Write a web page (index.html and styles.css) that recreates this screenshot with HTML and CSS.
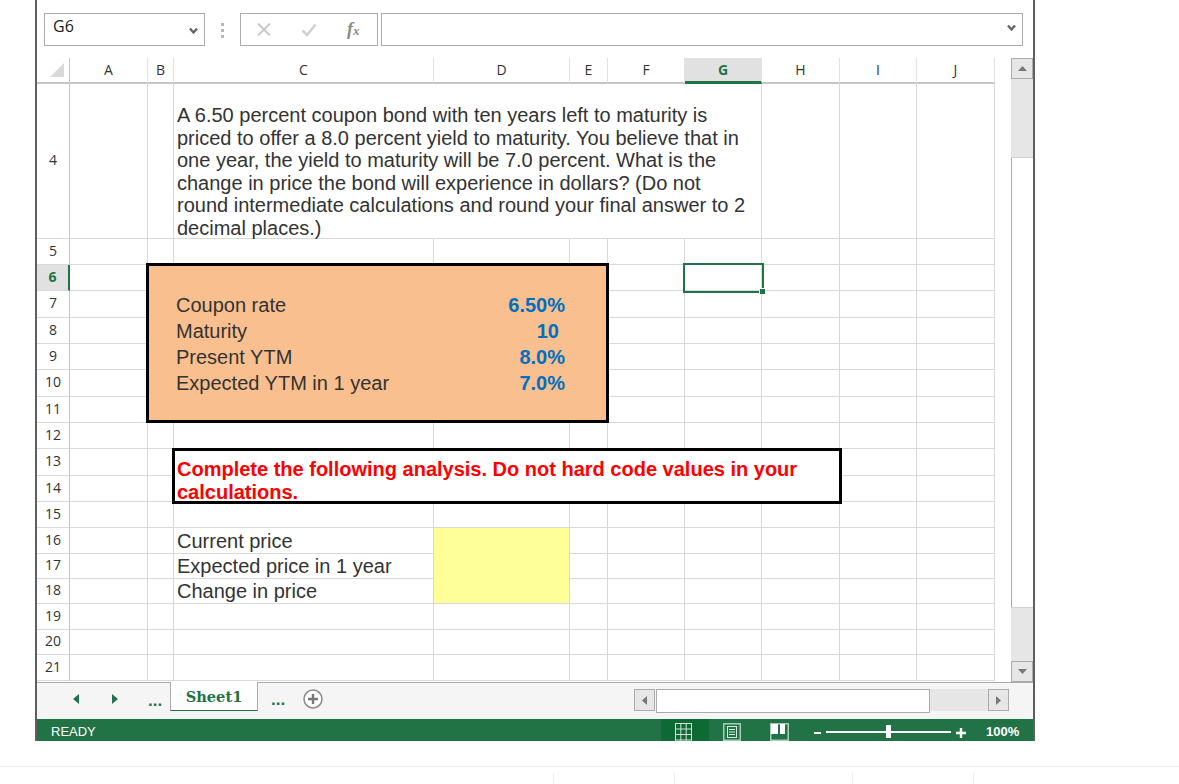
FILE: index.html
```html
<!DOCTYPE html>
<html lang="en">
<head>
<meta charset="utf-8">
<title>Sheet1</title>
<link rel="stylesheet" href="styles.css">
</head>
<body>
<div class="app">
  <div class="fbar">
    <div class="namebox"><span>G6</span>
      <svg class="chev" width="9" height="8" viewBox="0 0 9 8"><path d="M1 1.500 4.500 5.500 8 1.500" fill="none" stroke="#666" stroke-width="2.400"/></svg>
    </div>
    <div class="dots"><i></i><i></i><i></i></div>
    <div class="fbtns">
      <svg width="14" height="13" viewBox="0 0 14 13"><path d="M1 .5 13 12.500M13 .5 1 12.500" stroke="#c8c8c8" stroke-width="2" fill="none"/></svg>
      <svg width="16" height="14" viewBox="0 0 16 14"><path d="M1.500 7.500 6 12 14.500 1.500" stroke="#d2d2d2" stroke-width="2.600" fill="none"/></svg>
      <span class="fx">f<small>x</small></span>
    </div>
    <div class="finput">
      <svg class="chev" width="9" height="8" viewBox="0 0 9 8"><path d="M1 1.500 4.500 5.500 8 1.500" fill="none" stroke="#666" stroke-width="2.400"/></svg>
    </div>
  </div>

  <div class="sheet">
    <table class="grid">
      <colgroup>
        <col class="c-rh"><col class="c-a"><col class="c-b"><col class="c-c"><col class="c-d"><col class="c-e"><col class="c-f"><col class="c-g"><col class="c-h"><col class="c-i"><col class="c-j">
      </colgroup>
      <tr class="hdr">
        <th class="corner"><svg width="16" height="16" viewBox="0 0 16 16"><path d="M15 1V15H1Z" fill="#d9d9d9"/></svg></th>
        <th>A</th><th>B</th><th>C</th><th>D</th><th>E</th><th>F</th><th class="sel-col">G</th><th>H</th><th>I</th><th>J</th>
      </tr>
      <tr class="r155">
        <th>4</th><td></td><td></td>
        <td colspan="5" class="question"><div>A 6.50 percent coupon bond with ten years left to maturity is<br>priced to offer a 8.0 percent yield to maturity. You believe that in<br>one year, the yield to maturity will be 7.0 percent. What is the<br>change in price the bond will experience in dollars? (Do not<br>round intermediate calculations and round your final answer to 2<br>decimal places.)</div></td>
        <td></td><td></td><td></td>
      </tr>
      <tr class="r26"><th>5</th><td></td><td></td><td></td><td></td><td></td><td></td><td></td><td></td><td></td><td></td></tr>
      <tr class="r26">
        <th class="sel-row">6</th><td></td>
        <td colspan="4" rowspan="6" class="merged">
          <div class="inputs">
            <span>Coupon rate</span><b>6.50%</b>
            <span>Maturity</span><b class="plain">10</b>
            <span>Present YTM</span><b>8.0%</b>
            <span>Expected YTM in 1 year</span><b>7.0%</b>
          </div>
        </td>
        <td></td>
        <td class="active"><div class="selection"><i></i></div></td>
        <td></td><td></td><td></td>
      </tr>
      <tr class="r27"><th>7</th><td></td><td></td><td></td><td></td><td></td><td></td></tr>
      <tr class="r26"><th>8</th><td></td><td></td><td></td><td></td><td></td><td></td></tr>
      <tr class="r26"><th>9</th><td></td><td></td><td></td><td></td><td></td><td></td></tr>
      <tr class="r27"><th>10</th><td></td><td></td><td></td><td></td><td></td><td></td></tr>
      <tr class="r26"><th>11</th><td></td><td></td><td></td><td></td><td></td><td></td></tr>
      <tr class="r26"><th>12</th><td></td><td></td><td></td><td></td><td></td><td></td><td></td><td></td><td></td><td></td></tr>
      <tr class="r27">
        <th>13</th><td></td><td></td>
        <td colspan="6" rowspan="2" class="merged"><div class="notice">Complete the following analysis. Do not hard code values in your<br>calculations.</div></td>
        <td></td><td></td>
      </tr>
      <tr class="r26"><th>14</th><td></td><td></td><td></td><td></td></tr>
      <tr class="r26"><th>15</th><td></td><td></td><td></td><td></td><td></td><td></td><td></td><td></td><td></td><td></td></tr>
      <tr class="r26"><th>16</th><td></td><td></td><td class="label">Current price</td><td rowspan="3" class="answer"></td><td></td><td></td><td></td><td></td><td></td><td></td></tr>
      <tr class="r25"><th>17</th><td></td><td></td><td class="label">Expected price in 1 year</td><td></td><td></td><td></td><td></td><td></td><td></td></tr>
      <tr class="r25"><th>18</th><td></td><td></td><td class="label">Change in price</td><td></td><td></td><td></td><td></td><td></td><td></td></tr>
      <tr class="r26"><th>19</th><td></td><td></td><td></td><td></td><td></td><td></td><td></td><td></td><td></td><td></td></tr>
      <tr class="r25"><th>20</th><td></td><td></td><td></td><td></td><td></td><td></td><td></td><td></td><td></td><td></td></tr>
      <tr class="r26"><th>21</th><td></td><td></td><td></td><td></td><td></td><td></td><td></td><td></td><td></td><td></td></tr>
    </table>
    <div class="vscroll">
      <div class="sbtn v"><svg width="9" height="5" viewBox="0 0 9 5"><path d="M4.500 0 9 5H0Z" fill="#777"/></svg></div>
      <div class="vtrack t1"></div>
      <div class="vthumb"></div>
      <div class="vtrack t2"></div>
      <div class="sbtn v"><svg width="9" height="5" viewBox="0 0 9 5"><path d="M0 0H9L4.500 5Z" fill="#777"/></svg></div>
    </div>
  </div>

  <div class="tabbar">
    <div class="tabnav">
      <svg width="6" height="10" viewBox="0 0 6 10"><path d="M6 0V10L0 5Z" fill="#217346"/></svg>
      <svg width="6" height="10" viewBox="0 0 6 10"><path d="M0 0V10L6 5Z" fill="#217346"/></svg>
      <span class="more">...</span>
    </div>
    <div class="tab">Sheet1</div>
    <span class="more after">...</span>
    <svg class="addsheet" width="20" height="20" viewBox="0 0 20 20"><circle cx="10" cy="10" r="9" fill="#fff" stroke="#8a8a8a" stroke-width="1.500"/><path d="M10 5V15M5 10H15" stroke="#777" stroke-width="2.400"/></svg>
    <div class="hscroll">
      <div class="sbtn h"><svg width="5" height="9" viewBox="0 0 5 9"><path d="M5 0V9L0 4.500Z" fill="#777"/></svg></div>
      <div class="hthumb"></div>
      <div class="htrack"></div>
      <div class="sbtn h"><svg width="5" height="9" viewBox="0 0 5 9"><path d="M0 0V9L5 4.500Z" fill="#777"/></svg></div>
    </div>
  </div>

  <div class="status">
    <span class="ready">READY</span>
    <div class="view on">
      <svg width="17" height="19" viewBox="0 0 17 19"><path d="M.5 0V19M5.800 0V19M11.200 0V19M16.500 0V19M0 .5H17M0 6H17M0 11.500H17M0 17H17" stroke="#cfe3d7" fill="none"/></svg>
    </div>
    <div class="view page">
      <svg width="18" height="18" viewBox="0 0 18 18"><rect x=".75" y=".75" width="16.500" height="16.500" fill="none" stroke="#a9cdb8" stroke-width="1.500"/><rect x="4.500" y="3.500" width="9" height="11" fill="none" stroke="#d8e8de"/><path d="M6 6.500H12M6 9H12M6 11.500H12" stroke="#d8e8de"/></svg>
    </div>
    <div class="view brk">
      <svg width="19" height="18" viewBox="0 0 19 18"><rect x=".75" y=".75" width="17.500" height="16.500" fill="none" stroke="#a9cdb8" stroke-width="1.500"/><rect x="1" y="1" width="7" height="10" fill="#fff"/><rect x="10" y="1" width="5" height="10" fill="#fff"/></svg>
    </div>
    <div class="zoomer">
      <i class="minus"></i>
      <div class="slider"><i></i></div>
      <svg class="plus" width="10" height="10" viewBox="0 0 10 10"><path d="M0 5H10M5 0V10" stroke="#fff" stroke-width="2.400"/></svg>
    </div>
    <span class="pct">100%</span>
  </div>
</div>

<div class="foot"><span></span><span></span><span></span><span></span><span></span></div>
</body>
</html>
```

FILE: styles.css
```css
* { box-sizing: border-box; }
html, body { margin: 0; padding: 0; background: #fff; overflow: hidden; height: 784px; }
body { font-family: "Open Sans", sans-serif; color: #333; }

.app {
  margin-left: 35px;
  width: 1000px;
  height: 741px;
  border-left: 2px solid #5f5f5f;
  border-right: 2px solid #5f5f5f;
  display: flex;
  flex-direction: column;
}

/* formula bar */
.fbar { height: 58px; padding: 13px 10px 0 7px; display: flex; align-items: flex-start; flex: none; }
.namebox, .fbtns, .finput { height: 33px; border: 1px solid #ababab; background: #fff; }
.namebox { width: 161px; display: flex; justify-content: space-between; padding: 0 6px 0 8px; font-size: 16px; color: #222; line-height: 25px; }
.namebox .chev { margin-top: 13px; }
.dots { width: 35px; padding-top: 10px; display: flex; flex-direction: column; align-items: center; gap: 3px; }
.dots i { width: 3px; height: 3px; background: #b8b8b8; }
.fbtns { width: 138px; display: flex; align-items: center; padding-left: 16px; gap: 30px; }
.fx { font-family: "Liberation Serif", serif; font-style: italic; font-weight: 700; font-size: 18px; line-height: 20px; color: #8a8a8a; }
.fx small { font-size: 13px; }
.finput { width: 642px; margin-left: 3px; display: flex; justify-content: flex-end; padding-right: 6px; }
.finput .chev { margin-top: 10px; }

/* sheet */
.sheet { height: 624px; flex: none; display: flex; }
.grid { width: 958px; table-layout: fixed; border-collapse: separate; border-spacing: 0; flex: none; align-self: flex-start; }
.c-rh { width: 33px; } .c-a { width: 78px; } .c-b { width: 26px; } .c-c { width: 260px; }
.c-d { width: 136px; } .c-e { width: 38px; } .c-f { width: 77px; } .c-g { width: 77px; }
.c-h { width: 78px; } .c-i { width: 77px; } .c-j { width: 78px; }
.grid th, .grid td { padding: 0; border-right: 1px solid #d9d9d9; border-bottom: 1px solid #d9d9d9; }
.grid th { font-weight: 400; font-size: 14px; color: #333; text-align: center; background: #fff; padding-bottom: 3px; }
.hdr { height: 26px; }
.hdr th { border-bottom: 2px solid #c6c6c6; border-right: 1px solid #e2e2e2; line-height: 20px; padding-bottom: 0; }
.corner svg { display: block; margin: 0 0 0 12px; }
.corner { vertical-align: middle; }
.hdr .sel-col { background: #e1e1e1; color: #217346; font-weight: 700; border-bottom: 3px solid #217346; }
.sel-row { background: #e1e1e1 !important; color: #217346 !important; font-weight: 700 !important; border-right: 2px solid #217346 !important; }
.grid tr > th:first-child { border-right-color: #c6c6c6; }
.r25 { height: 25px; } .r26 { height: 26px; } .r27 { height: 27px; } .r155 { height: 155px; }

.question { font: 20px/22.6px "Liberation Sans", sans-serif; color: #333; padding-left: 3px !important; vertical-align: top; }
.question div { height: 150px; padding-top: 20px; white-space: nowrap; }
.label { font: 20px/24px "Liberation Sans", sans-serif; color: #333; padding-left: 3px !important; white-space: nowrap; }
.answer { background: #ffff99; }
.merged { position: relative; }
.active { position: relative; }
.selection { position: absolute; left: -2px; right: -3px; top: -2px; bottom: -3px; border: 2px solid #217346; }
.selection i { position: absolute; right: -3px; bottom: -3px; width: 6px; height: 6px; background: #217346; border: 1px solid #fff; border-right: 0; border-bottom: 0; }

.inputs {
  position: absolute; left: -2px; right: -2px; top: -2px; bottom: -1px;
  background: #f9bf8e; border: 3px solid #000;
  padding: 26px 41px 0 27px;
  display: grid; grid-template-columns: 1fr auto; grid-auto-rows: 26px; align-items: center;
  font: 20px/24px "Liberation Sans", sans-serif; color: #333;
}
.inputs b { color: #0070c0; text-align: right; }
.inputs .plain { padding-right: 6px; }
.notice {
  position: absolute; left: -2px; right: -3px; top: -1px; bottom: -3px;
  background: #fff; border: 3px solid #000; padding: 7px 0 0 2px;
  font: 700 20px/22.5px "Liberation Sans", sans-serif; color: #f00; white-space: nowrap; overflow: hidden;
}

/* vertical scrollbar */
.vscroll { margin-left: 16px; width: 22px; height: 624px; display: flex; flex-direction: column; flex: none; }
.sbtn { display: flex; align-items: center; justify-content: center; background: #e6e6e6; border: 1px solid #ababab; flex: none; }
.sbtn.v { height: 21px; }
.sbtn.h { width: 21px; height: 22px; }
.vtrack { background: #e6e6e6; flex: none; }
.t1 { height: 79px; border-bottom: 1px solid #d0d0d0; }
.t2 { height: 54px; border-top: 1px solid #d0d0d0; }
.vthumb { height: 449px; background: #fff; border-left: 1px solid #ababab; flex: none; }

/* tab bar */
.tabbar { height: 37px; flex: none; background: #f5f5f5; border-top: 1px solid #ababab; display: flex; align-items: flex-start; position: relative; }
.tabnav { width: 133px; display: flex; align-items: center; padding: 5px 0 0 36px; gap: 33px; height: 26px; }
.more { color: #217346; font: 700 17px/14px "Liberation Sans", sans-serif; }
.tabnav .more { margin-left: -3px; margin-top: 5px; }
.tab { width: 88px; height: 29px; margin-top: -1px; background: #fff; border-left: 1px solid #ababab; border-right: 1px solid #ababab; border-bottom: 1px solid #217346; font: 700 14.600px/29px "DejaVu Serif", serif; color: #217346; text-align: center; }
.more.after { margin: 10px 0 0 13px; }
.addsheet { margin: 6px 0 0 18px; }
.hscroll { margin: 6px 24px 0 auto; display: flex; }
.hthumb { width: 274px; height: 24px; background: #fff; border: 1px solid #ababab; margin-left: 1px; }
.htrack { width: 58px; height: 22px; background: #e6e6e6; }

/* status bar */
.status { height: 22px; flex: none; background: #217346; color: #fff; display: flex; align-items: center; overflow: hidden; }
.ready { font: 13px/22px "Liberation Sans", sans-serif; margin-left: 14px; width: 610px; padding-top: 3px; }
.view { height: 22px; flex: none; display: flex; align-items: flex-start; justify-content: center; padding-top: 4px; }
.view.on { width: 48px; background: #0e6a35; padding-right: 4px; }
.view.page { width: 46px; }
.view.brk { width: 48px; }
.zoomer { display: flex; align-items: center; margin: 4px 0 0 11px; flex: none; }
.minus { width: 7px; height: 2px; background: #fff; margin-top: 1px; }
.slider { width: 125px; height: 2px; background: #fff; margin-left: 5px; position: relative; }
.slider i { position: absolute; left: 60px; top: -6px; width: 5px; height: 13px; background: #fff; }
.plus { margin-left: 5px; margin-top: 1px; }
.pct { font: 700 13px/22px "Liberation Sans", sans-serif; margin-left: 20px; padding-top: 3px; }

/* page footer */
.foot { margin-top: 25px; border-top: 1px solid #f0f0f0; padding-top: 6px; display: grid; grid-template-columns: 553px 121px 178px 121px 1fr; height: 18px; }
.foot span { border-left: 1px solid #eee; height: 11px; }
.foot span:first-child { border-left: 0; }
```
